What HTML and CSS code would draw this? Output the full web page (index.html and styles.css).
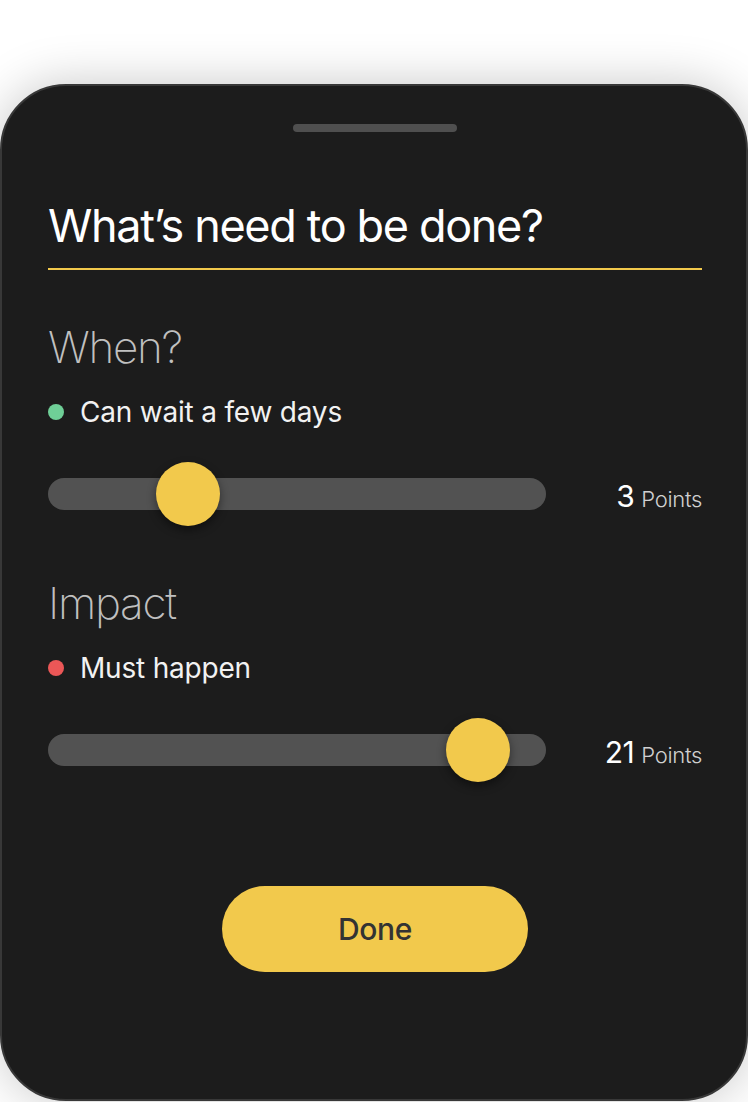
FILE: index.html
```html
<!DOCTYPE html>
<html lang="en">
<head>
<meta charset="utf-8">
<title>Task</title>
<link rel="stylesheet" href="styles.css">
</head>
<body>
<div class="sheet">
  <div class="handle"></div>
  <h1 class="title">What’s need to be done?</h1>

  <h2 class="section">When?</h2>
  <div class="item"><span class="dot dot-green"></span><span>Can wait a few days</span></div>
  <div class="slider-row">
    <div class="track"><div class="thumb" style="left:108px"></div></div>
    <div class="points"><span class="num">3</span><span class="unit">Points</span></div>
  </div>

  <h2 class="section section-impact">Impact</h2>
  <div class="item"><span class="dot dot-red"></span><span>Must happen</span></div>
  <div class="slider-row">
    <div class="track"><div class="thumb" style="left:398px"></div></div>
    <div class="points"><span class="num">21</span><span class="unit">Points</span></div>
  </div>

  <div class="actions"><button class="done">Done</button></div>
</div>
</body>
</html>
```
FILE: styles.css
```css
html, body {
  margin: 0;
  padding: 0;
  background: #ffffff;
}
body {
  width: 748px;
  height: 1102px;
  overflow: hidden;
  font-family: Inter, "Noto Sans", sans-serif;
}
.sheet {
  box-sizing: border-box;
  margin-top: 84px;
  width: 748px;
  height: 1017px;
  background: #1c1c1c;
  border: 2px solid #383838;
  border-radius: 66px;
  box-shadow: 0 0 50px rgba(0, 0, 0, 0.22);
  padding: 0 44px 0 46px;
  display: flex;
  flex-direction: column;
}
.handle {
  width: 164px;
  height: 8px;
  border-radius: 4px;
  background: #4f4f4f;
  margin: 38px auto 0;
}
.title {
  margin: 66px 0 0;
  font-size: 45px;
  font-weight: 400;
  line-height: 56px;
  color: #ffffff;
  letter-spacing: -1.35px;
  padding-bottom: 14px;
  border-bottom: 2px solid #f2c94c;
}
.section {
  margin: 50px 0 0;
  font-size: 44px;
  font-weight: 200;
  line-height: 54px;
  color: #c0c0c0;
  letter-spacing: -1.3px;
}
.section-impact {
  margin-top: 50px;
}
.item {
  margin-top: 21px;
  display: flex;
  align-items: center;
  gap: 16px;
  font-size: 28px;
  line-height: 34px;
  color: #f2f2f2;
  letter-spacing: -0.2px;
}
.dot {
  width: 16px;
  height: 16px;
  border-radius: 50%;
  margin-top: -1px;
}
.dot-green { background: #6fcf97; }
.dot-red { background: #eb5757; }
.slider-row {
  margin-top: 33px;
  height: 64px;
  display: flex;
  align-items: center;
  justify-content: space-between;
}
.track {
  position: relative;
  width: 498px;
  height: 32px;
  border-radius: 16px;
  background: #525252;
}
.thumb {
  position: absolute;
  top: -16px;
  width: 64px;
  height: 64px;
  border-radius: 50%;
  background: #f2c94c;
  box-shadow: 0 4px 10px rgba(0, 0, 0, 0.45);
}
.points {
  color: #ffffff;
  white-space: nowrap;
  padding-top: 4px;
}
.num {
  font-size: 30px;
  font-weight: 400;
  letter-spacing: -0.5px;
}
.unit {
  margin-left: 7px;
  font-size: 22px;
  font-weight: 300;
  color: #d0d0d0;
  letter-spacing: -0.3px;
}
.actions {
  margin-top: 104px;
  display: flex;
  justify-content: center;
}
.done {
  width: 306px;
  height: 86px;
  border: none;
  border-radius: 43px;
  background: #f2c94c;
  color: #333333;
  font-family: Inter, "Noto Sans", sans-serif;
  font-size: 30px;
  font-weight: 500;
  letter-spacing: -0.3px;
  padding: 0;
}
```
